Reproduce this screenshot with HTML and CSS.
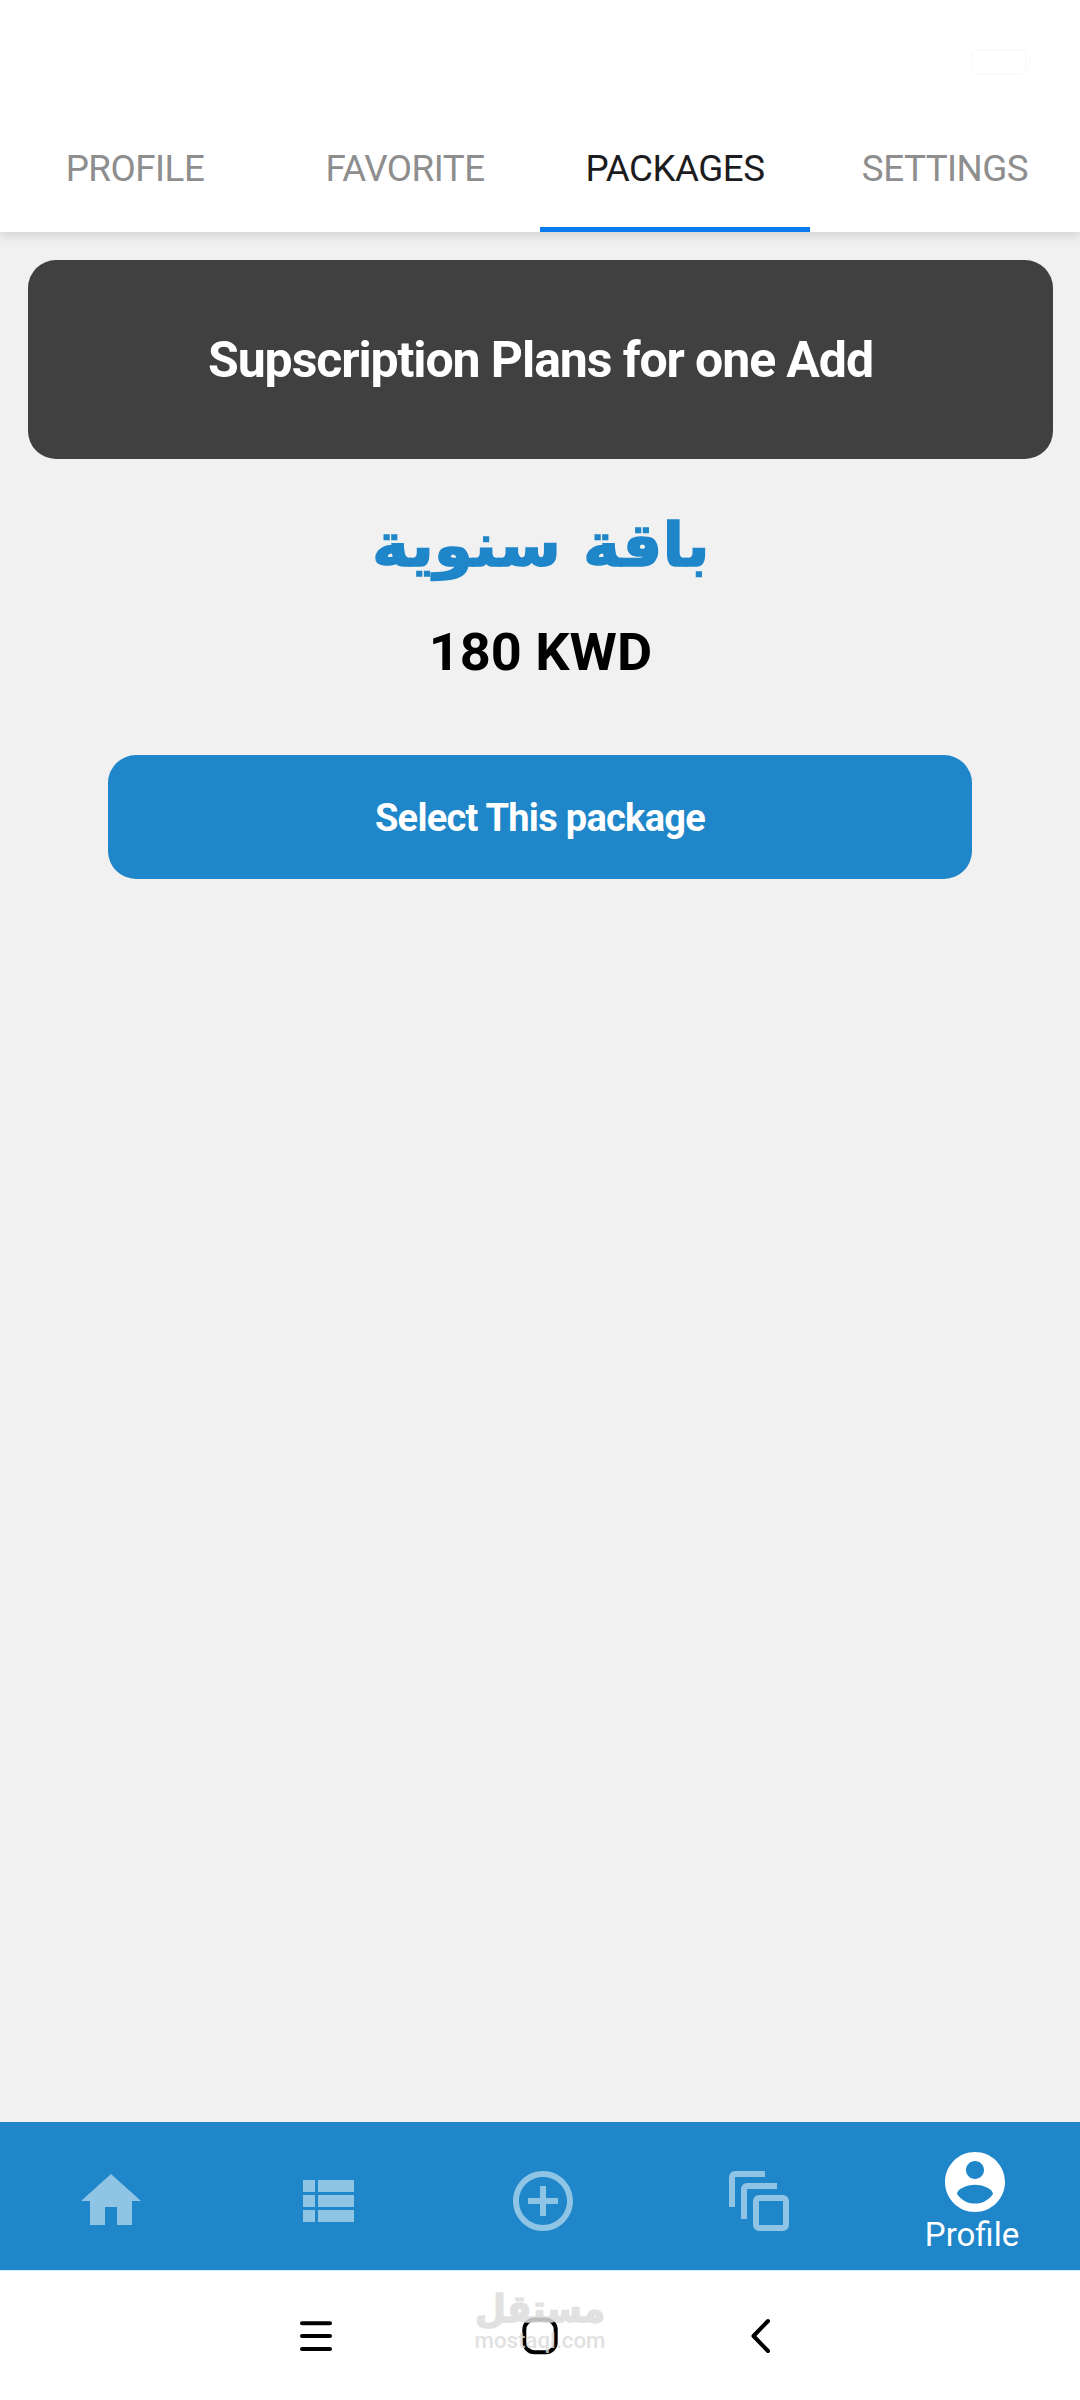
FILE: index.html
```html
<!DOCTYPE html>
<html lang="en">
<head>
<meta charset="utf-8">
<title>Packages</title>
<link rel="stylesheet" href="styles.css">
</head>
<body>
<div class="screen">
  <div class="status-bar">
    <svg class="battery" width="64" height="28" viewBox="0 0 64 28"><rect x="2" y="2" width="54" height="24" rx="5" fill="none" stroke="#fbfbfb" stroke-width="2"/><rect x="59" y="10" width="3" height="8" fill="#fcfcfc"/></svg>
  </div>
  <nav class="tabs">
    <span class="tab">PROFILE</span>
    <span class="tab">FAVORITE</span>
    <span class="tab active">PACKAGES</span>
    <span class="tab">SETTINGS</span>
  </nav>
  <main class="content">
    <h1 class="banner"><span>Supscription Plans for one Add</span></h1>
    <h2 class="plan" lang="ar" dir="rtl"><span>باقة سنوية</span></h2>
    <p class="price"><span>180 KWD</span></p>
    <button class="select"><span>Select This package</span></button>
  </main>
  <nav class="bottom-nav">
    <a class="item"><svg class="icon" viewBox="0 0 24 24"><path d="M10 20v-6h4v6h5v-8h3L12 3 2 12h3v8z"/></svg></a>
    <a class="item"><svg class="icon" viewBox="0 0 24 24"><path d="M4 14h4v-4H4zM4 19h4v-4H4zM4 9h4V5H4zM9 14h12v-4H9zM9 19h12v-4H9zM9 5v4h12V5z"/></svg></a>
    <a class="item"><svg class="icon" viewBox="0 0 24 24"><path d="M13 7h-2v4H7v2h4v4h2v-4h4v-2h-4zM12 2C6.48 2 2 6.48 2 12s4.48 10 10 10 10-4.480 10-10S17.520 2 12 2zm0 18c-4.410 0-8-3.590-8-8s3.590-8 8-8 8 3.590 8 8-3.590 8-8 8z"/></svg></a>
    <a class="item"><svg class="icon" viewBox="0 0 24 24"><path fill-rule="evenodd" d="M4 2h10v2H4v10H2V4a2 2 0 0 1 2-2zM8 6h10v2H8v10H6V8a2 2 0 0 1 2-2zM12 10h8a2 2 0 0 1 2 2v8a2 2 0 0 1-2 2h-8a2 2 0 0 1-2-2v-8a2 2 0 0 1 2-2zm0 2v8h8v-8z"/></svg></a>
    <a class="item current"><svg class="icon" viewBox="0 0 24 24"><path d="M12 2C6.48 2 2 6.48 2 12s4.48 10 10 10 10-4.48 10-10S17.52 2 12 2zm0 3c1.66 0 3 1.34 3 3s-1.34 3-3 3-3-1.34-3-3 1.34-3 3-3zm0 14.2c-2.5 0-4.71-1.28-6-3.22.03-1.99 4-3.08 6-3.08 1.99 0 5.97 1.09 6 3.08-1.29 1.94-3.5 3.22-6 3.22z"/></svg><span class="label">Profile</span></a>
  </nav>
  <footer class="system-nav">
    <svg class="sys" width="40" height="40" viewBox="0 0 40 40"><path d="M6 7.300h28M6 20h28M6 33h28"/></svg>
    <svg class="sys" width="40" height="40" viewBox="0 0 40 40"><rect x="4.300" y="3.600" width="31.400" height="32.600" rx="10"/></svg>
    <svg class="sys" width="40" height="40" viewBox="0 0 40 40"><path d="M24 5 9.500 20 24 35"/></svg>
    <div class="watermark">
      <svg width="160" height="76" viewBox="-10 -6 160 76">
        <text class="wm-ar" x="70" y="32" text-anchor="middle" textLength="130" lengthAdjust="spacingAndGlyphs">مستقل</text>
        <text class="wm-en" x="4.500" y="57.500" textLength="131" lengthAdjust="spacingAndGlyphs">mostaql.com</text>
      </svg>
    </div>
  </footer>
</div>
</body>
</html>
```
FILE: styles.css
```css
* { box-sizing: border-box; margin: 0; }
body { background: #f1f1f1; font-family: Roboto, sans-serif; }
.screen { width: 1080px; height: 2400px; display: flex; flex-direction: column; overflow: hidden; }

.status-bar { position: relative; z-index: 1; height: 106px; padding: 48px 46px 0 0; background: #fff; display: flex; justify-content: flex-end; align-items: flex-start; }

.tabs { height: 126px; background: #fff; display: grid; grid-template-columns: repeat(4, 1fr); box-shadow: 0 2px 12px rgba(0, 0, 0, .17); }
.tab { display: flex; align-items: center; justify-content: center; padding-top: 3px; border-bottom: 5px solid transparent; color: #8e8e8e; font-size: 36.75px; letter-spacing: -.5px; }
.tab.active { color: #1c1c1e; border-color: #0a7aef; }

.content { flex: 1; padding: 28px 27px 0 28px; display: flex; flex-direction: column; align-items: center; }
.banner { width: 100%; height: 199px; padding-top: 1px; border-radius: 28px; background: #404040; color: #fff; display: flex; align-items: center; justify-content: center; font-size: 50px; font-weight: 700; letter-spacing: -1.1px; }
.plan { margin-top: 41px; height: 90px; color: #1e86c9; font: 700 60px/90px "DejaVu Sans", sans-serif; -webkit-text-stroke: 1.5px #1e86c9; }
.plan span { transform: scaleX(1.05); }
.price { margin-top: 25px; line-height: 76px; font-size: 52px; font-weight: 700; color: #000; }
.price span { transform: scaleX(1.04); }
.select { margin-top: 64px; margin-right: 1px; width: 864px; height: 124px; padding-top: 3px; border: 0; border-radius: 28px; background: #1e86c9; color: #fff; font: 700 38px Roboto, sans-serif; letter-spacing: -.72px; }
.banner span, .plan span, .price span, .select span { display: inline-block; }

.bottom-nav { height: 148px; background: #1e86c9; padding-left: 3px; display: flex; }
.item { flex: 0 0 216px; display: flex; flex-direction: column; align-items: center; padding-top: 43px; }
.icon { width: 72px; height: 72px; fill: #8fc4e5; }
.item.current { padding-top: 24px; }
.current .icon { fill: #fff; }
.label { margin-top: -3px; margin-right: 6px; color: #fff; font-size: 33px; line-height: 40px; }

.system-nav { position: relative; height: 130px; background: #fff; border-top: 1px solid #cfeafb; padding: 45px 296px 0; display: flex; justify-content: space-between; align-items: flex-start; }
.sys { fill: none; stroke: #000; stroke-width: 4; stroke-linecap: round; stroke-linejoin: round; }
.watermark { position: absolute; left: 460px; top: 13px; opacity: .85; }
.watermark text { fill: #dcdcdc; }
.wm-ar { font: 700 38px "DejaVu Sans", sans-serif; stroke: #dcdcdc; stroke-width: 1.5px; stroke-linejoin: round; }
.wm-en { font: 500 22px Roboto, sans-serif; }
```
